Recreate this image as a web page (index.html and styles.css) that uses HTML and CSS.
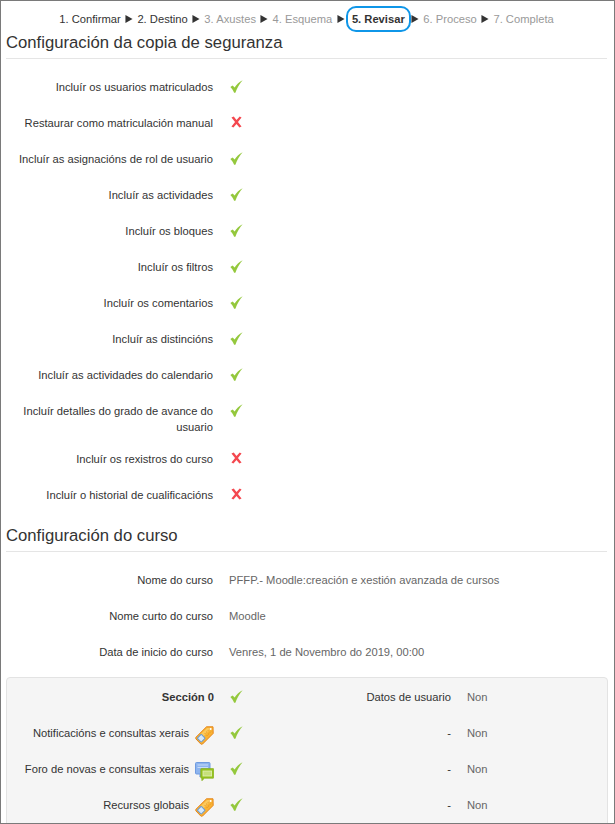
FILE: index.html
```html
<!DOCTYPE html>
<html lang="gl">
<head>
<meta charset="utf-8">
<title>Revisar</title>
<link rel="stylesheet" href="styles.css">
</head>
<body>
<svg class="defs" width="0" height="0" aria-hidden="true">
  <defs>
    <symbol id="tick" viewBox="0 0 14 14">
      <path d="M0.4 7.6 L2.8 5.8 L5 8.2 C6.8 5.2 9.6 2.4 13.6 0.4 C10.6 3.8 7.8 8.2 5.8 13.6 L4.4 13.6 C3.4 11 2 9.2 0.4 7.6Z" fill="#94c83d"/>
    </symbol>
    <symbol id="cross" viewBox="0 0 12 13">
      <path d="M0.5 1.5 L3 0.5 L6 4.2 L9.5 0.5 L11.5 1.5 L7.6 6.4 L11.5 11.5 L9.2 12.5 L6 8.6 L2.6 12.5 L0.5 11.5 L4.4 6.4Z" fill="#f4484f"/>
    </symbol>
    <symbol id="tag" viewBox="0 0 19 19">
      <path d="M11.5 0.8 L18 0.8 L18.2 7.4 L7.6 18 C7 18.4 6.4 18.4 5.8 18 L1 13 C0.6 12.4 0.6 11.8 1 11.2 Z" fill="#f9b233" stroke="#e5861c" stroke-linejoin="round"/>
      <path d="M12 2 L16.8 2 L8 10.8 L5.6 8.2Z" fill="#fcc95c"/>
      <rect x="3.4" y="9.4" width="5.6" height="5.6" rx=".6" transform="rotate(45 6.2 12.2)" fill="#d6e8fa" stroke="#6a9bd3"/>
      <path d="M9.6 8 L14.6 3 M11.6 10 L16.2 5.4" stroke="#e08c1e" stroke-width="1" stroke-dasharray="1 1"/>
      <circle cx="15.6" cy="3" r="1" fill="#fff"/>
    </symbol>
    <symbol id="forum" viewBox="0 0 19 19">
      <path d="M1.5 0.5 H14 A1 1 0 0 1 15 1.5 V11 A1 1 0 0 1 14 12 H7 L5 15 V12 H1.5 A1 1 0 0 1 0.5 11 V1.5 A1 1 0 0 1 1.5 0.5Z" fill="#8db4ee" stroke="#6f9be0"/>
      <path d="M2.5 3 H13 M2.5 5.5 H13" stroke="#c8dcf8"/>
      <path d="M6.5 6.5 H18 A.8 .8 0 0 1 18.8 7.3 V15.5 A.8 .8 0 0 1 18 16.3 H9.5 L6.8 18.8 V16.3 H6.5 A.8 .8 0 0 1 5.7 15.5 V7.3 A.8 .8 0 0 1 6.5 6.5Z" fill="#94c11f" stroke="#83ad1a" stroke-width=".6"/>
      <rect x="8" y="9" width="8.6" height="5" fill="#c6e07a" stroke="#e3f0b8" stroke-width=".8"/>
    </symbol>
    <symbol id="arrow" viewBox="0 0 9 10">
      <path d="M0.5 0.5 L8.5 5 L0.5 9.5Z" fill="#333"/>
    </symbol>
  </defs>
</svg>
<div class="frame">
  <nav class="stepper">
    <span class="step">1. Confirmar</span>
    <svg class="arrow"><use href="#arrow"/></svg>
    <span class="step">2. Destino</span>
    <svg class="arrow"><use href="#arrow"/></svg>
    <span class="step future">3. Axustes</span>
    <svg class="arrow"><use href="#arrow"/></svg>
    <span class="step future">4. Esquema</span>
    <svg class="arrow"><use href="#arrow"/></svg>
    <span class="step current">5. Revisar</span>
    <svg class="arrow"><use href="#arrow"/></svg>
    <span class="step future">6. Proceso</span>
    <svg class="arrow"><use href="#arrow"/></svg>
    <span class="step future">7. Completa</span>
  </nav>

  <h2 class="heading">Configuración da copia de seguranza</h2>
  <div class="rows">
    <div class="row"><div class="label">Incluír os usuarios matriculados</div><svg class="tick"><use href="#tick"/></svg></div>
    <div class="row"><div class="label">Restaurar como matriculación manual</div><svg class="cross"><use href="#cross"/></svg></div>
    <div class="row"><div class="label">Incluír as asignacións de rol de usuario</div><svg class="tick"><use href="#tick"/></svg></div>
    <div class="row"><div class="label">Incluír as actividades</div><svg class="tick"><use href="#tick"/></svg></div>
    <div class="row"><div class="label">Incluír os bloques</div><svg class="tick"><use href="#tick"/></svg></div>
    <div class="row"><div class="label">Incluír os filtros</div><svg class="tick"><use href="#tick"/></svg></div>
    <div class="row"><div class="label">Incluír os comentarios</div><svg class="tick"><use href="#tick"/></svg></div>
    <div class="row"><div class="label">Incluír as distincións</div><svg class="tick"><use href="#tick"/></svg></div>
    <div class="row"><div class="label">Incluír as actividades do calendario</div><svg class="tick"><use href="#tick"/></svg></div>
    <div class="row"><div class="label">Incluír detalles do grado de avance do usuario</div><svg class="tick"><use href="#tick"/></svg></div>
    <div class="row"><div class="label">Incluír os rexistros do curso</div><svg class="cross"><use href="#cross"/></svg></div>
    <div class="row"><div class="label">Incluír o historial de cualificacións</div><svg class="cross"><use href="#cross"/></svg></div>
  </div>

  <h2 class="heading">Configuración do curso</h2>
  <div class="rows">
    <div class="row"><div class="label">Nome do curso</div><div class="value">PFFP.- Moodle:creación e xestión avanzada de cursos</div></div>
    <div class="row"><div class="label">Nome curto do curso</div><div class="value">Moodle</div></div>
    <div class="row"><div class="label">Data de inicio do curso</div><div class="value">Venres, 1 de Novembro do 2019, 00:00</div></div>
  </div>

  <section class="panel">
    <div class="prow">
      <div class="label strong">Sección 0</div><svg class="tick"><use href="#tick"/></svg>
      <div class="label">Datos de usuario</div><div class="value">Non</div>
    </div>
    <div class="prow">
      <div class="label with-icon">Notificacións e consultas xerais<svg class="modicon"><use href="#tag"/></svg></div><svg class="tick"><use href="#tick"/></svg>
      <div class="label">-</div><div class="value">Non</div>
    </div>
    <div class="prow">
      <div class="label with-icon">Foro de novas e consultas xerais<svg class="modicon"><use href="#forum"/></svg></div><svg class="tick"><use href="#tick"/></svg>
      <div class="label">-</div><div class="value">Non</div>
    </div>
    <div class="prow">
      <div class="label with-icon">Recursos globais<svg class="modicon"><use href="#tag"/></svg></div><svg class="tick"><use href="#tick"/></svg>
      <div class="label">-</div><div class="value">Non</div>
    </div>
  </section>
</div>
</body>
</html>
```
FILE: styles.css
```css
* { box-sizing: border-box; }
html, body { margin: 0; padding: 0; background: #fff; overflow: hidden; }
.defs { position: absolute; }
.frame {
  width: 615px;
  height: 824px;
  border: 1px solid #7a7a7a;
  overflow: hidden;
  padding: 0 7px 0 5px;
  font-family: "Liberation Sans", Arial, sans-serif;
  font-size: 11.2px;
  line-height: 16px;
  color: #333;
}
.stepper {
  display: flex;
  justify-content: center;
  align-items: center;
  height: 26px;
  margin-top: 5px;
  gap: 4.3px;
  color: #333;
}
.step { white-space: nowrap; }
.future { color: #999; }
.current {
  font-weight: bold;
  border: 2px solid #0f96e8;
  border-radius: 10px;
  height: 26px;
  line-height: 22px;
  padding: 0 4px;
  margin: 0 -4px 0 -3px;
}
.arrow { width: 8px; height: 10px; flex: none; }
.heading {
  margin: 0 0 20px;
  padding: 1px 0 5px;
  border-bottom: 1px solid #e5e5e5;
  font-size: 16.7px;
  font-weight: normal;
  line-height: 20px;
  color: #333;
}
.rows { display: flex; flex-direction: column; gap: 16px; }
.rows + .heading { margin-top: 18px; }
.rows + .panel { margin-top: 13px; }
.row {
  display: grid;
  grid-template-columns: 207px 1fr;
  column-gap: 16px;
  min-height: 20px;
  align-items: start;
}
.label { text-align: right; }
.value { color: #666; }
.strong { font-weight: bold; margin-right: -1px; }
.tick { width: 13px; height: 13px; margin: 1px 0 0 1px; display: block; }
.cross { width: 11px; height: 12px; margin: 1px 0 0 2px; display: block; }
.panel {
  border: 1px solid #e3e3e3;
  border-radius: 4px;
  background: #f5f5f5;
  padding: 11px 0 0;
  width: 602px;
}
.prow {
  display: grid;
  grid-template-columns: 206px 14px 192px 1fr;
  column-gap: 16px;
  height: 36px;
  align-items: start;
}
.with-icon { display: flex; justify-content: flex-end; gap: 6px; margin-right: -1px; }
.modicon { width: 19px; height: 19px; flex: none; margin-top: 1px; }
```
